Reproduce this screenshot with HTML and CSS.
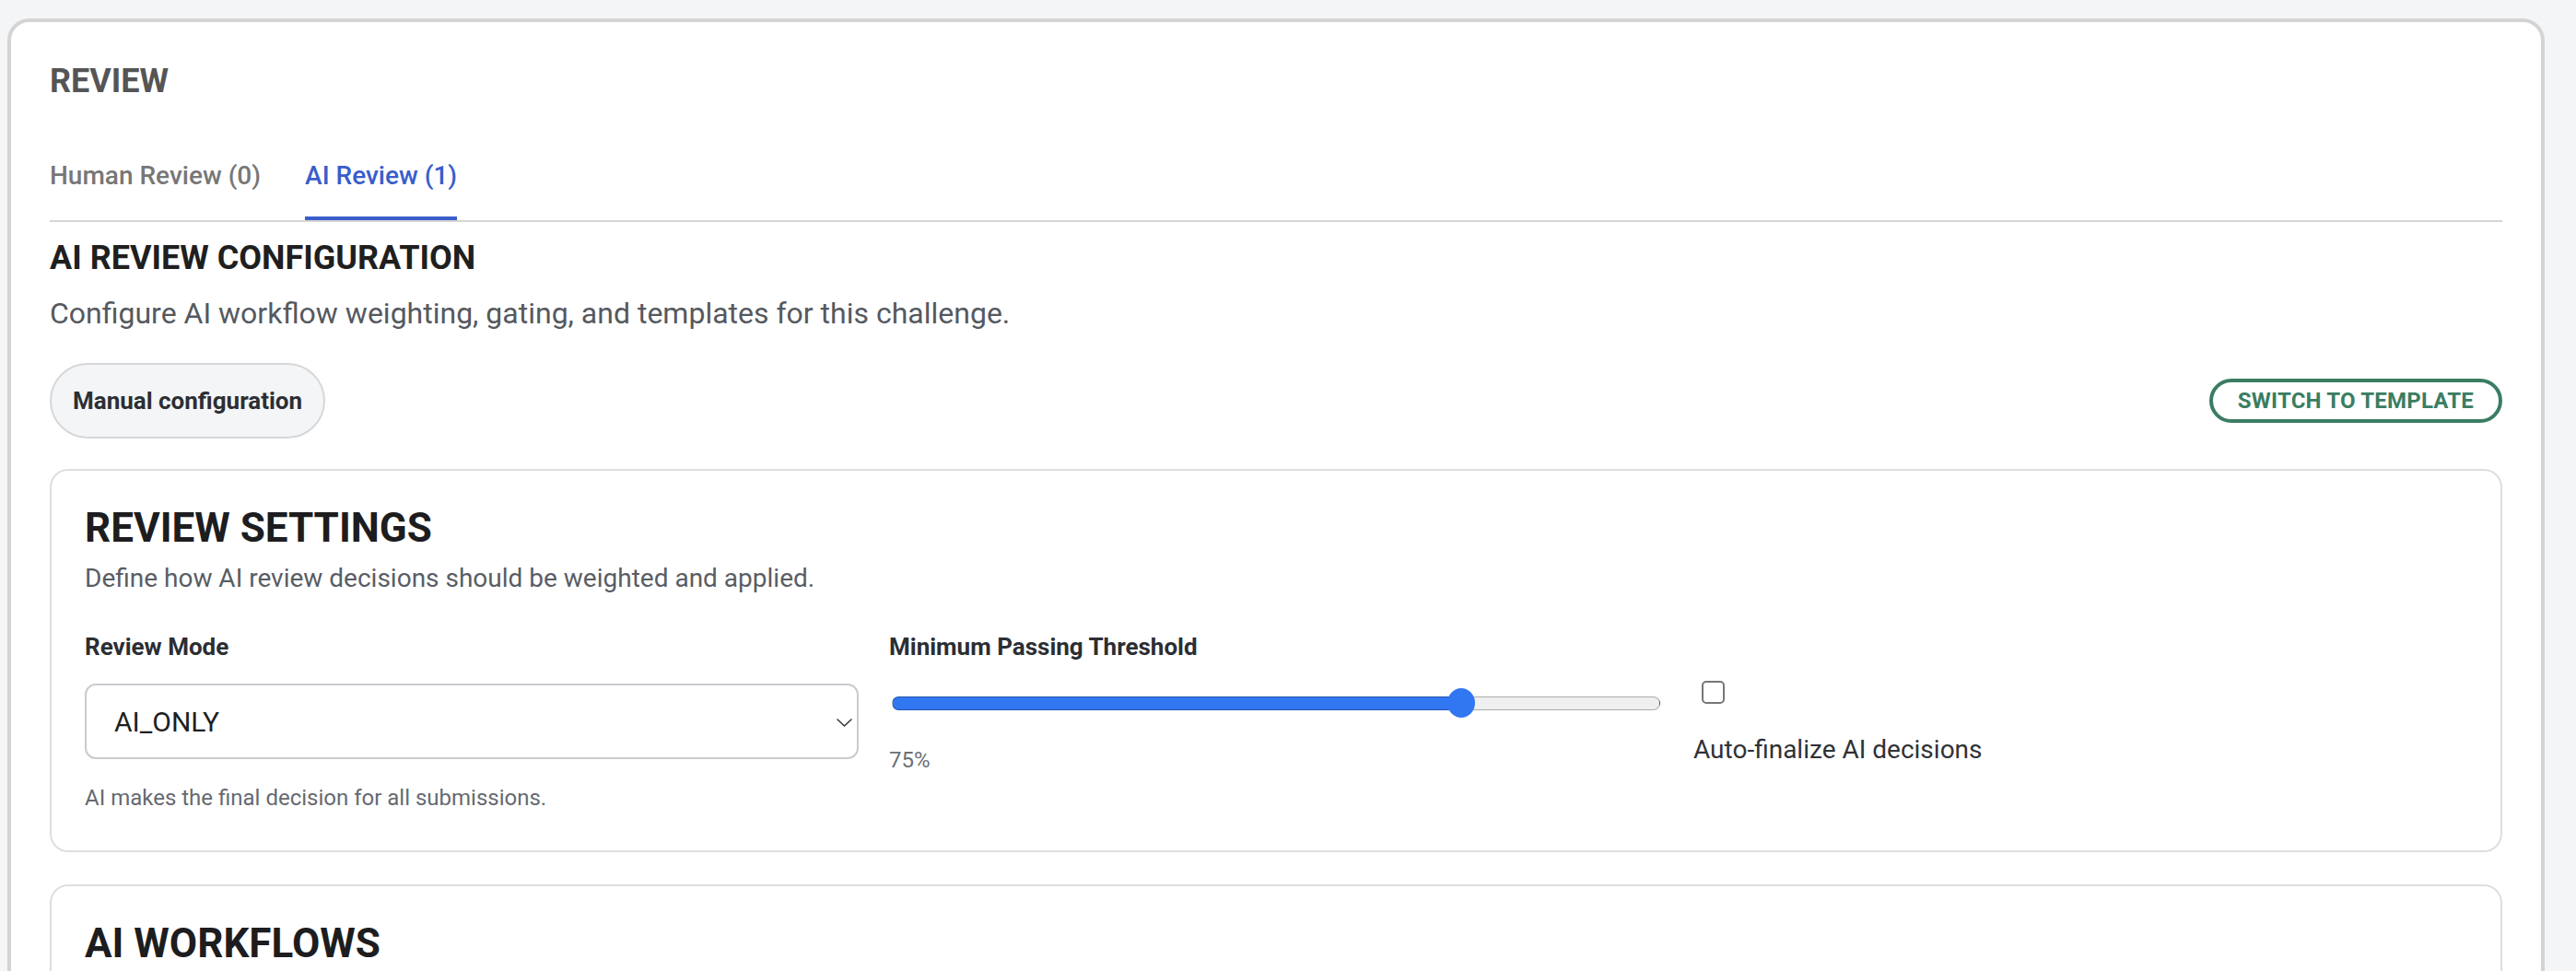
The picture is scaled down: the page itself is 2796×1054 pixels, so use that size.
FILE: index.html
```html
<!DOCTYPE html>
<html lang="en">
<head>
    <meta charset="UTF-8">
    <meta name="viewport" content="width=device-width, initial-scale=1.0">
    <title>Review</title>
    <link rel="stylesheet" href="styles.css">
</head>
<body>
    <div class="page">
        <section class="review-card">
            <h2 class="review-title">REVIEW</h2>

            <div class="tabs">
                <button type="button" class="tab">Human Review (0)</button>
                <button type="button" class="tab active">AI Review (1)</button>
            </div>

            <h3 class="config-title">AI REVIEW CONFIGURATION</h3>
            <p class="config-desc">Configure AI workflow weighting, gating, and templates for this challenge.</p>

            <div class="config-toolbar">
                <span class="mode-pill">Manual configuration</span>
                <button type="button" class="btn-outline">SWITCH TO TEMPLATE</button>
            </div>

            <div class="panel">
                <h4 class="panel-title">REVIEW SETTINGS</h4>
                <p class="panel-desc">Define how AI review decisions should be weighted and applied.</p>

                <div class="settings-grid">
                    <div class="field">
                        <label for="review_mode">Review Mode</label>
                        <div class="select-wrap">
                            <select id="review_mode" name="review_mode">
                                <option>AI_ONLY</option>
                                <option>AI_GATING</option>
                                <option>HUMAN_ONLY</option>
                            </select>
                            <!-- dropdown arrow -->
                            <svg class="chevron" viewBox="0 0 17 9" fill="none" stroke="#333" stroke-width="1.5" stroke-linecap="round" stroke-linejoin="round">
                                <path d="M1 1l7.5 7L16 1"/>
                            </svg>
                        </div>
                        <p class="hint">AI makes the final decision for all submissions.</p>
                    </div>

                    <div class="field">
                        <label for="threshold">Minimum Passing Threshold</label>
                        <input type="range" class="range" id="threshold" name="threshold" min="0" max="100" value="75" style="--fill: 75%">
                        <p class="hint range-value">75%</p>
                    </div>

                    <label class="check-field">
                        <input type="checkbox" name="auto_finalize">
                        <span>Auto-finalize AI decisions</span>
                    </label>
                </div>
            </div>

            <div class="panel">
                <h4 class="panel-title">AI WORKFLOWS</h4>
            </div>
        </section>
    </div>
</body>
</html>
```

FILE: styles.css
```css
* {
    box-sizing: border-box;
}
body {
    margin: 0;
    font-family: Roboto, "Liberation Sans", Arial, sans-serif;
    background-color: #f4f5f7;
    color: #222;
}
.page {
    padding: 20px 34px 40px 8px;
}
.review-card {
    background-color: #fff;
    border: 4px solid #d4d4d4;
    border-radius: 24px;
    padding: 43px 42px 42px;
}
.review-title {
    margin: 0 0 37px;
    font-size: 36px;
    line-height: 42px;
    font-weight: 700;
    color: #555;
}

/* tabs */
.tabs {
    display: flex;
    gap: 48px;
    border-bottom: 2px solid #d6d6d6;
}
.tab {
    margin: 0;
    padding: 28px 0;
    font-family: inherit;
    font-size: 28px;
    line-height: 33px;
    font-weight: 500;
    color: #777;
    background: none;
    border: none;
    border-bottom: 4px solid transparent;
    cursor: pointer;
}
.tab.active {
    color: #3a5dcb;
    border-bottom-color: #3a5dcb;
}

.config-title {
    margin: 18px 0 0;
    font-size: 36px;
    line-height: 42px;
    font-weight: 700;
    color: #1f1f1f;
}
.config-desc {
    margin: 20px 0 0;
    font-size: 32px;
    line-height: 38px;
    color: #55595f;
}
.config-toolbar {
    display: flex;
    align-items: center;
    justify-content: space-between;
    margin-top: 35px;
}
.mode-pill {
    padding: 24px 23px;
    font-size: 26px;
    line-height: 30px;
    font-weight: 700;
    color: #2c2f33;
    background-color: #f4f5f7;
    border: 2px solid #d6d7d9;
    border-radius: 41px;
}
.btn-outline {
    padding: 6px 27px;
    font-family: inherit;
    font-size: 24px;
    line-height: 28px;
    font-weight: 700;
    letter-spacing: 0.2px;
    color: #3b7d62;
    background-color: #fff;
    border: 4px solid #3b7d62;
    border-radius: 24px;
    cursor: pointer;
}

/* settings panels */
.panel {
    margin-top: 33px;
    padding: 36px 36px 42px;
    border: 2px solid #dedede;
    border-radius: 20px;
}
.panel + .panel {
    margin-top: 35px;
}
.panel-title {
    margin: 0;
    font-size: 44px;
    line-height: 52px;
    font-weight: 700;
    color: #1d1d1f;
}
.panel-desc {
    margin: 12px 0 0;
    font-size: 28px;
    line-height: 33px;
    color: #595d64;
}
.settings-grid {
    display: grid;
    grid-template-columns: repeat(3, 1fr);
    gap: 33px;
    margin-top: 43px;
}
.field label {
    display: block;
    font-size: 26px;
    line-height: 30px;
    font-weight: 700;
    color: #2b2e33;
}
.select-wrap {
    position: relative;
    margin-top: 25px;
}
.select-wrap select {
    -webkit-appearance: none;
    appearance: none;
    display: block;
    width: 100%;
    height: 82px;
    padding: 0 60px 0 30px;
    font-family: inherit;
    font-size: 30px;
    color: #1f1f1f;
    background-color: #fff;
    border: 2px solid #c9cbcf;
    border-radius: 12px;
}
.chevron {
    position: absolute;
    right: 7px;
    top: 38px;
    width: 17px;
    height: 9px;
    pointer-events: none;
}
.hint {
    margin: 27px 0 0;
    font-size: 24px;
    line-height: 30px;
    color: #666a70;
}
.range-value {
    margin-top: 31px;
    color: #6b6f76;
}

/* threshold slider */
.range {
    -webkit-appearance: none;
    appearance: none;
    display: block;
    width: calc(100% - 6px);
    height: 32px;
    margin: 30px 3px 0;
    background: none;
}
.range::-webkit-slider-runnable-track {
    height: 15px;
    border: 1px solid rgba(0, 0, 0, 0.28);
    border-radius: 8px;
    background: linear-gradient(to right, #3277f2 var(--fill), #efefef var(--fill));
}
.range::-webkit-slider-thumb {
    -webkit-appearance: none;
    width: 30px;
    height: 32px;
    margin-top: -9.5px;
    border: none;
    border-radius: 50%;
    background-color: #3277f2;
}

.check-field {
    display: flex;
    flex-direction: column;
    justify-content: center;
    align-items: flex-start;
    gap: 33px;
    font-size: 28px;
    line-height: 33px;
    color: #2f3237;
}
.check-field input {
    -webkit-appearance: none;
    appearance: none;
    width: 25px;
    height: 25px;
    margin: 0 0 0 9px;
    background-color: #fff;
    border: 2px solid #767676;
    border-radius: 5px;
}
```
